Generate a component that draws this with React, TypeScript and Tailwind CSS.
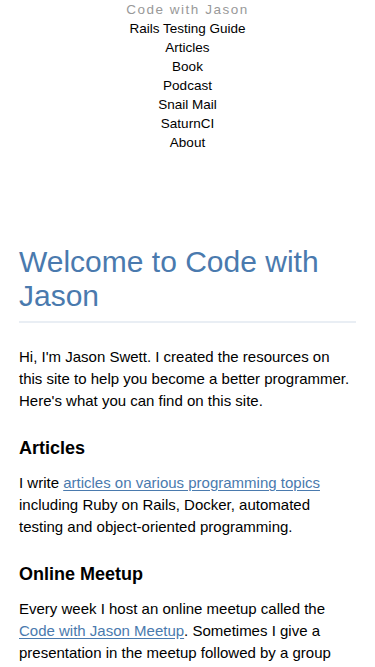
import React from 'react';

const navItems = ['Rails Testing Guide', 'Articles', 'Book', 'Podcast', 'Snail Mail', 'SaturnCI', 'About'];

export default function App() {
  return (
    <div className="min-h-screen bg-white text-black" style={{ fontFamily: '"Liberation Sans", Arial, sans-serif' }}>
      <nav className="flex flex-col items-center text-[13.5px] leading-[19px]">
        <a className="tracking-[1.5px] text-[#999999]">Code with Jason</a>
        {navItems.map((item) => (
          <a key={item} className="text-black">
            {item}
          </a>
        ))}
      </nav>

      <main className="px-[19px] pt-[93px]">
        <h1 className="border-b-2 border-[#e9eef4] pb-[8px] text-[30px] font-normal leading-[34px] text-[#4a7aae]">
          Welcome to Code with Jason
        </h1>

        <p className="mt-[23px] text-[15px] leading-[22px]">
          Hi, I'm Jason Swett. I created the resources on this site to help you become a better programmer. Here's
          what you can find on this site.
        </p>

        <h2 className="mt-[24px] text-[18px] font-bold leading-[24px]">Articles</h2>
        <p className="mt-[12px] text-[15px] leading-[22px]">
          I write{' '}
          <a className="text-[#4a7aae] underline underline-offset-2">articles on various programming topics</a>{' '}
          including Ruby on Rails, Docker, automated testing and object-oriented programming.
        </p>

        <h2 className="mt-[24px] text-[18px] font-bold leading-[24px]">Online Meetup</h2>
        <p className="mt-[12px] text-[15px] leading-[22px]">
          Every week I host an online meetup called the{' '}
          <a className="text-[#4a7aae] underline underline-offset-2">Code with Jason Meetup</a>. Sometimes I give a
          presentation in the meetup followed by a group discussion, and other times we just hang out and chat.
        </p>
      </main>
    </div>
  );
}
